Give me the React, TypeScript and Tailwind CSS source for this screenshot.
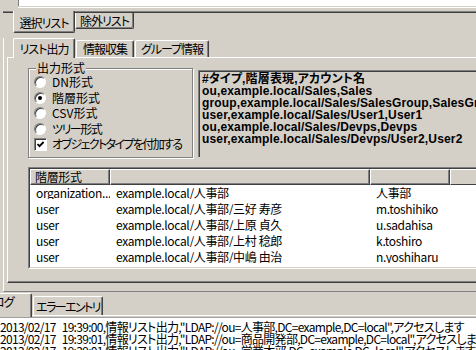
import React from "react";

const rows = [
  ["organization...", "example.local/人事部", "人事部"],
  ["user", "example.local/人事部/三好 寿彦", "m.toshihiko"],
  ["user", "example.local/人事部/上原 貞久", "u.sadahisa"],
  ["user", "example.local/人事部/上村 稔郎", "k.toshiro"],
  ["user", "example.local/人事部/中嶋 由治", "n.yoshiharu"],
  ["user", "example.local/人事部/中村 和也", "n.kazuya"],
];

const preview = [
  "#タイプ,階層表現,アカウント名",
  "ou,example.local/Sales,Sales",
  "group,example.local/Sales/SalesGroup,SalesGroup",
  "user,example.local/Sales/User1,User1",
  "ou,example.local/Sales/Devps,Devps",
  "user,example.local/Sales/Devps/User2,User2",
];

const logs = [
  '2013/02/17 19:39:00,情報リスト出力,"LDAP://ou=人事部,DC=example,DC=local",アクセスします',
  '2013/02/17 19:39:01,情報リスト出力,"LDAP://ou=商品開発部,DC=example,DC=local",アクセスします',
  '2013/02/17 19:39:01,情報リスト出力,"LDAP://ou=営業本部,DC=example,DC=local",アクセスします',
];

const Radio = ({ checked }: { checked?: boolean }) => (
  <div className="w-[12px] h-[12px] rounded-full bg-white border border-t-[#808080] border-l-[#808080] border-b-white border-r-white shadow-[inset_1px_1px_0_#404040] flex items-center justify-center shrink-0">
    {checked && <div className="w-[4px] h-[4px] rounded-full bg-black" />}
  </div>
);

const TopTab = ({ label, w, selected }: { label: string; w: string; selected?: boolean }) =>
  selected ? (
    <div
      className={`relative z-10 h-[20px] ${w} bg-[#d4d0c8] border-t border-l border-white border-r border-r-[#404040] shadow-[inset_-1px_0_0_#808080] rounded-t-[2px] flex items-center justify-center tracking-[-1px]`}
    >
      {label}
    </div>
  ) : (
    <div
      className={`mt-[2px] ml-px h-[17px] ${w} bg-[#d4d0c8] border-t border-l border-white border-r border-r-[#404040] shadow-[inset_-1px_0_0_#808080] rounded-t-[2px] flex items-center justify-center tracking-[-1px]`}
    >
      {label}
    </div>
  );

export default function App() {
  return (
    <div className="w-[476px] h-[350px] overflow-hidden bg-[#d4d0c8] text-black text-[12px] leading-[12px] font-['Noto_Sans_CJK_JP',sans-serif] [font-feature-settings:'palt'] whitespace-nowrap">
      {/* upper panel edge */}
      <div className="h-[11px]">
        <div className="ml-[18px] h-[6px] bg-white border-l border-[#808080]" />
        <div className="ml-[18px] mt-px h-px bg-white" />
      </div>
      <div className="ml-[3px] h-px bg-[#808080]" />
      <div className="ml-[3px] h-px bg-[#404040]" />

      {/* bottom aligned tabs */}
      <div className="flex items-start pl-[13px] h-[20px] tracking-[-1px]">
        <div className="relative z-10 -mt-[2px] h-[22px] w-[62px] bg-[#d4d0c8] border-l border-white border-r border-b border-r-[#404040] border-b-[#404040] shadow-[inset_-1px_-1px_0_#808080] rounded-b-[2px] flex items-center justify-center pt-[3px]">
          選択リスト
        </div>
        <div className="h-[16px] w-[59px] bg-[#d4d0c8] border-l border-white border-r border-b border-r-[#404040] border-b-[#404040] shadow-[inset_-1px_-1px_0_#808080] rounded-b-[2px] flex items-center justify-center">
          除外リスト
        </div>
      </div>

      {/* outer page */}
      <div className="ml-[3px] h-[254px] border-l border-white border-b border-b-[#808080]">
        <div className="mt-[5px] pl-[9px] h-[19px] flex items-start">
          <TopTab label="リスト出力" w="w-[62px]" selected />
          <TopTab label="情報収集" w="w-[58px]" />
          <TopTab label="グループ情報" w="w-[74px]" />
        </div>

        {/* inner page */}
        <div className="ml-[3px] h-[226px] w-[520px] border-t border-l border-white border-b border-b-[#404040] shadow-[inset_0_-1px_0_#808080]">
          <div className="flex pt-[4px] pl-[20px]">
            <div className="pt-[6px]">
              <div className="relative w-[165px] h-[90px] border border-[#808080] shadow-[inset_1px_1px_0_#fff,1px_1px_0_#fff] pl-[5px]">
                <span className="absolute -top-[7px] left-[7px] px-px bg-[#d4d0c8] leading-[12px]">出力形式</span>
                <div className="h-[5px]" />
                <div className="h-[16px] flex items-center gap-[6px]">
                  <Radio />
                  <span>DN形式</span>
                </div>
                <div className="h-[15px] flex items-center gap-[6px]">
                  <Radio checked />
                  <span>階層形式</span>
                </div>
                <div className="h-[16px] flex items-center gap-[6px]">
                  <Radio />
                  <span>CSV形式</span>
                </div>
                <div className="h-[15px] flex items-center gap-[6px]">
                  <Radio />
                  <span className="tracking-[-1.5px]">ツリー形式</span>
                </div>
                <div className="h-[16px] flex items-center gap-[5px]">
                  <div className="w-[13px] h-[13px] bg-white border border-t-[#808080] border-l-[#808080] border-b-white border-r-white shadow-[inset_1px_1px_0_#404040] flex items-center justify-center shrink-0">
                    <svg width="9" height="9" viewBox="0 0 9 9">
                      <path d="M1.5 4 L3.5 6.2 L7.6 2" stroke="#000" strokeWidth="1.8" fill="none" />
                    </svg>
                  </div>
                  <span className="tracking-[-1.6px]">オブジェクトタイプを付加する</span>
                </div>
              </div>
            </div>
            <div className="ml-[5px] mt-[8px] h-[87px] w-[320px] border-t border-l border-[#808080] shadow-[inset_1px_1px_0_#404040] pl-[3px] pt-[2px] overflow-hidden font-['Liberation_Sans','Noto_Sans_CJK_JP',sans-serif] font-bold tracking-[0.15px]">
              {preview.map((l) => (
                <div key={l} className="h-[12px] leading-[12px]">
                  {l}
                </div>
              ))}
            </div>
          </div>

          {/* list view */}
          <div className="ml-[20px] mt-[9px] h-[102px] border border-t-[#808080] border-l-[#808080] border-b-white border-r-white">
            <div className="h-full border border-t-[#404040] border-l-[#404040] border-b-[#d4d0c8] border-r-[#d4d0c8] bg-white overflow-hidden tracking-[-0.35px]">
              <div className="flex h-[16px] bg-[#d4d0c8]">
                <div className="w-[80px] border-t border-l border-white border-r border-b border-r-[#404040] border-b-[#404040] shadow-[inset_-1px_-1px_0_#808080] pl-[4px] flex items-center">
                  階層形式
                </div>
                <div className="w-[260px] border-t border-l border-white border-r border-b border-r-[#404040] border-b-[#404040] shadow-[inset_-1px_-1px_0_#808080]" />
                <div className="w-[80px] border-t border-l border-white border-r border-b border-r-[#404040] border-b-[#404040] shadow-[inset_-1px_-1px_0_#808080]" />
                <div className="flex-1 border-t border-l border-white border-b border-b-[#404040]" />
              </div>
              {rows.map((r, i) => (
                <div key={i} className="flex h-[16px] items-center">
                  <div className="w-[80px] pl-[6px] overflow-hidden">{r[0]}</div>
                  <div className="w-[260px] pl-[6px] overflow-hidden">{r[1]}</div>
                  <div className="w-[80px] pl-[6px] overflow-hidden">{r[2]}</div>
                </div>
              ))}
            </div>
          </div>
        </div>
      </div>

      {/* log tabs */}
      <div className="flex items-start h-[23px] tracking-[-1px]">
        <div className="relative z-10 -ml-[14px] mt-px h-[24px] w-[46px] bg-[#d4d0c8] border-t border-white border-r border-r-[#404040] shadow-[inset_-1px_0_0_#808080] rounded-t-[2px] pl-[7px] pt-[2px]">
          ログ
        </div>
        <div className="ml-px mt-[4px] h-[19px] w-[70px] bg-[#d4d0c8] border-t border-l border-white border-r border-r-[#404040] shadow-[inset_-1px_0_0_#808080] rounded-t-[2px] flex items-center justify-center pt-[2px] tracking-[-1.6px]">
          エラーエントリ
        </div>
      </div>
      <div className="h-px bg-white" />
      <div className="h-px bg-[#d4d0c8]" />
      <div className="h-px bg-[#a0a0a0]" />
      <div className="bg-white h-[40px] pt-[3px] overflow-hidden tracking-[-0.7px] [word-spacing:4px]">
        {logs.map((l) => (
          <div key={l} className="h-[12px] leading-[12px]">
            {l}
          </div>
        ))}
      </div>
    </div>
  );
}
